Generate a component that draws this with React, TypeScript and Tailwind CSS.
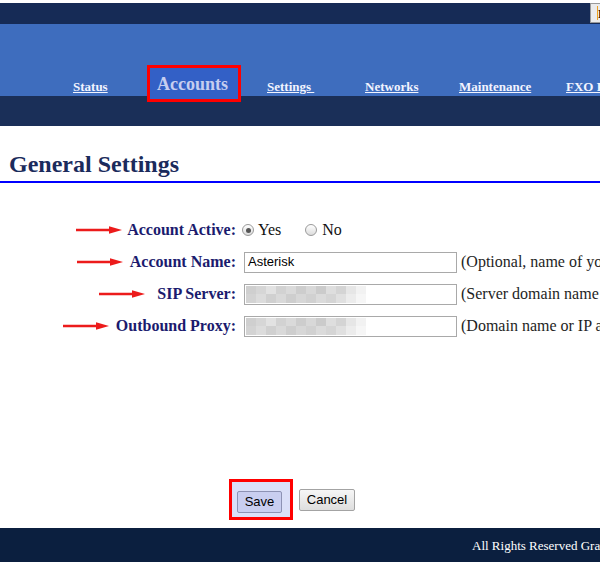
import type { ReactNode } from 'react';

// ─── Annotation arrow ────────────────────────────────────────────────────────

function Arrow() {
  return (
    <svg width="46" height="10" viewBox="0 0 46 10" className="shrink-0">
      <path d="M0 5 H35" stroke="#ec1b1b" strokeWidth="2.4" />
      <path d="M33 1.2 L46 5 L33 8.8 Z" fill="#ec1b1b" />
    </svg>
  );
}

// ─── Pixelated (blurred) value ───────────────────────────────────────────────

const mosaicTop = [
  'bg-[#cfcfcf]', 'bg-[#d6d6d6]', 'bg-[#e2e2e2]', 'bg-[#d2d2d2]', 'bg-[#dadada]', 'bg-[#cdcdcd]',
  'bg-[#d8d8d8]', 'bg-[#cbcbcb]', 'bg-[#dedede]', 'bg-[#d4d4d4]', 'bg-[#e6e6e6]', 'bg-[#f2f2f2]',
];
const mosaicBottom = [
  'bg-[#d3d3d3]', 'bg-[#dcdcdc]', 'bg-[#d0d0d0]', 'bg-[#d9d9d9]', 'bg-[#cecece]', 'bg-[#d7d7d7]',
  'bg-[#d1d1d1]', 'bg-[#dbdbdb]', 'bg-[#d5d5d5]', 'bg-[#e0e0e0]', 'bg-[#ececec]', 'bg-[#f6f6f6]',
];

function Mosaic() {
  return (
    <div className="flex flex-col h-full">
      <div className="flex flex-1">
        {mosaicTop.map((c, i) => (
          <div key={i} className={`w-[10px] ${c}`} />
        ))}
      </div>
      <div className="flex flex-1">
        {mosaicBottom.map((c, i) => (
          <div key={i} className={`w-[10px] ${c}`} />
        ))}
      </div>
    </div>
  );
}

// ─── Form pieces ─────────────────────────────────────────────────────────────

function Radio({ checked }: { checked?: boolean }) {
  return (
    <span className="w-[12px] h-[12px] rounded-full border border-[#9a9a9a] bg-gradient-to-b from-[#ffffff] to-[#dcdcdc] flex items-center justify-center shrink-0">
      {checked && <span className="w-[5px] h-[5px] rounded-full bg-[#555555]" />}
    </span>
  );
}

function Row({ label, gap, children, hint }: { label: string; gap: string; children: ReactNode; hint?: string }) {
  return (
    <div className="flex items-center h-[32px] whitespace-nowrap">
      <div className="w-[236px] shrink-0 flex items-center justify-end">
        <span className={gap}>
          <Arrow />
        </span>
        <span className="text-[16px] font-bold text-[#1b1b6e] leading-none">{label}</span>
      </div>
      <div className="flex items-center pl-[8px] shrink-0">{children}</div>
      {hint && <span className="ml-[4px] text-[16px] text-[#1e1e1e] leading-none">{hint}</span>}
    </div>
  );
}

function TextBox({ value, blurred }: { value?: string; blurred?: boolean }) {
  return (
    <div className="w-[213px] h-[21px] border border-[#a9a9a9] bg-white flex items-center px-[1px] py-[1px]">
      {blurred ? (
        <Mosaic />
      ) : (
        <span className="pl-[2px] text-[13px] text-black font-['Liberation_Sans',Arial,sans-serif]">{value}</span>
      )}
    </div>
  );
}

// ─── Page ────────────────────────────────────────────────────────────────────

export default function App() {
  return (
    <div className="w-[600px] h-[562px] overflow-hidden bg-white flex flex-col font-['Liberation_Serif','Times_New_Roman',serif]">
      {/* Top bar */}
      <div className="mt-[3px] h-[21px] bg-[#162b56] flex shrink-0">
        <div className="ml-[590px] w-[60px] h-[20px] border border-[#9a9a9a] bg-[#ececec] flex items-center shrink-0">
          <span className="ml-[6px] w-[1px] h-[14px] bg-[#f0a020]" />
          <span className="text-[13px] font-bold text-black leading-none">L</span>
        </div>
      </div>

      {/* Nav */}
      <div className="h-[72px] bg-[#3e6dbe] flex items-end pl-[73px] shrink-0 relative z-10 whitespace-nowrap">
        <a className="w-[74px] shrink-0 pb-[3px] text-[13px] font-bold text-[#f2f4ff] underline leading-none">Status</a>
        <div className="w-[94px] h-[37px] -mb-[6px] shrink-0 border-[3px] border-[#ff0000] bg-[#3360c6] flex items-center pl-[7px] pt-[1px]">
          <span className="text-[18px] font-bold text-[#c6cef0] leading-none">Accounts</span>
        </div>
        <a className="ml-[26px] w-[98px] shrink-0 pb-[3px] text-[13px] font-bold text-[#f2f4ff] underline leading-none">Settings&nbsp;</a>
        <a className="w-[94px] shrink-0 pb-[3px] text-[13px] font-bold text-[#f2f4ff] underline leading-none">Networks</a>
        <a className="w-[107px] shrink-0 pb-[3px] text-[13px] font-bold text-[#f2f4ff] underline leading-none">Maintenance</a>
        <a className="shrink-0 pb-[3px] text-[13px] font-bold text-[#f2f4ff] underline leading-none">FXO Ports</a>
      </div>
      <div className="h-[30px] bg-[#1a2f58] shrink-0" />

      {/* Main */}
      <div className="flex-1 flex flex-col">
        <div className="mt-[24px] h-[33px] border-b-2 border-[#0000ff]">
          <h1 className="pl-[9px] text-[24px] font-bold text-[#1b2b5c] leading-[29px]">General Settings</h1>
        </div>

        <div className="mt-[31px] flex flex-col">
          <Row label="Account Active:" gap="mr-[5px]">
            <div className="flex items-center text-[16px] text-[#111111] leading-none -ml-[2px]">
              <Radio checked />
              <span className="ml-[4px]">Yes</span>
              <span className="ml-[24px]">
                <Radio />
              </span>
              <span className="ml-[5px]">No</span>
            </div>
          </Row>
          <Row label="Account Name:" gap="mr-[7px]" hint="(Optional, name of your account)">
            <TextBox value="Asterisk" />
          </Row>
          <Row label="SIP Server:" gap="mr-[12px]" hint="(Server domain name or IP address)">
            <TextBox blurred />
          </Row>
          <Row label="Outbound Proxy:" gap="mr-[7px]" hint="(Domain name or IP address)">
            <TextBox blurred />
          </Row>
        </div>

        <div className="mt-[137px] pl-[229px] flex items-center font-['Liberation_Sans',Arial,sans-serif]">
          <div className="w-[64px] h-[41px] border-[3px] border-[#ff0000] bg-[#dadff8] pl-[5px] pt-[7px]">
            <button className="w-[45px] h-[22px] border border-[#8d92b4] rounded-[2px] bg-[#c9cef0] text-[13px] text-black">
              Save
            </button>
          </div>
          <button className="ml-[6px] w-[56px] h-[22px] border border-[#a3a3a3] rounded-[2px] bg-gradient-to-b from-[#f6f6f6] to-[#dedede] text-[13px] text-black">
            Cancel
          </button>
        </div>
      </div>

      {/* Footer */}
      <div className="h-[34px] bg-[#0b1f3f] flex items-center pl-[472px] whitespace-nowrap shrink-0">
        <span className="text-[13px] text-white leading-none">All Rights Reserved Grandstream Networks, Inc. 2006-2016</span>
      </div>
    </div>
  );
}
